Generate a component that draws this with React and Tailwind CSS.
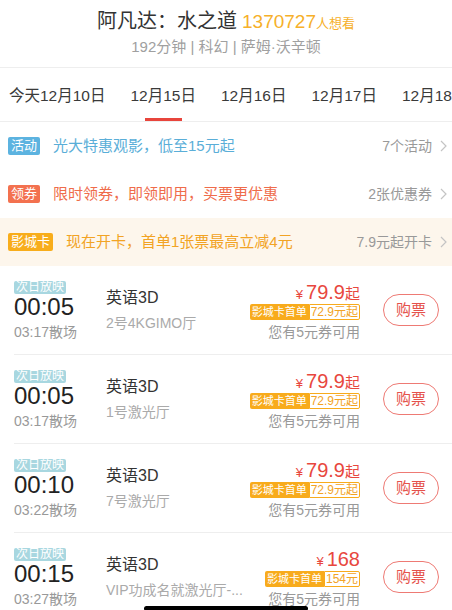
const dates = ["今天12月10日", "12月15日", "12月16日", "12月17日", "12月18日"];

const promos = [
  { tag: "活动", tagBg: "bg-[#5cb3e0]", text: "光大特惠观影，低至15元起", color: "text-[#5aaed8]", right: "7个活动", rowBg: "bg-white" },
  { tag: "领券", tagBg: "bg-[#f3714f]", text: "限时领券，即领即用，买票更优惠", color: "text-[#ef6c4b]", right: "2张优惠券", rowBg: "bg-white" },
  { tag: "影城卡", tagBg: "bg-[#f8ad1b]", text: "现在开卡，首单1张票最高立减4元", color: "text-[#f2a324]", right: "7.9元起开卡", rowBg: "bg-[#fdf6ec]" },
];

const shows = [
  { start: "00:05", end: "03:17散场", lang: "英语3D", hall: "2号4KGIMO厅", price: "79.9", from: true, card: "72.9元起" },
  { start: "00:05", end: "03:17散场", lang: "英语3D", hall: "1号激光厅", price: "79.9", from: true, card: "72.9元起" },
  { start: "00:10", end: "03:22散场", lang: "英语3D", hall: "7号激光厅", price: "79.9", from: true, card: "72.9元起" },
  { start: "00:15", end: "03:27散场", lang: "英语3D", hall: "VIP功成名就激光厅-...", price: "168", from: false, card: "154元" },
];

function Chevron() {
  return (
    <svg width="7" height="12" viewBox="0 0 7 12" className="ml-[8px] shrink-0">
      <polyline points="1,1 6,6 1,11" fill="none" stroke="#c4c4c4" strokeWidth="1.2" />
    </svg>
  );
}

function ShowRow({ show }) {
  return (
    <div className="ml-[14px] flex h-[89px] items-center border-b border-[#eeeeee] pr-[13px]">
      <div className="flex w-[92px] shrink-0 flex-col items-start pt-[2px]">
        <span className="h-[13px] rounded-[2px] bg-[#a8d7e0] px-[2px] text-[12px] leading-[13px] text-white">次日放映</span>
        <span className="text-[24px] leading-[26px] text-[#222]">{show.start}</span>
        <span className="mt-[3px] text-[14px] leading-[18px] text-[#999]">{show.end}</span>
      </div>
      <div className="flex min-w-0 flex-1 flex-col">
        <span className="text-[16px] leading-[20px] text-[#333]">{show.lang}</span>
        <span className="mt-[6px] whitespace-nowrap text-[14px] leading-[18px] text-[#aaa]">{show.hall}</span>
      </div>
      <div className="flex shrink-0 flex-col items-end">
        <div className="flex h-[24px] items-baseline text-[#e8473e]">
          <span className="mr-[3px] text-[13px]">¥</span>
          <span className="text-[20px] leading-[24px]">{show.price}</span>
          {show.from && <span className="text-[15px]">起</span>}
        </div>
        <div className="flex h-[16px] items-stretch rounded-[2px] text-[11px] leading-[16px]">
          <span className="rounded-l-[2px] bg-[#f8ab1c] px-[2px] text-white">影城卡首单</span>
          <span className="rounded-r-[2px] border border-[#f8ab1c] bg-white px-[1px] text-[12px] leading-[14px] text-[#f2a324]">{show.card}</span>
        </div>
        <span className="mt-[3px] text-[14px] leading-[18px] text-[#999]">您有5元券可用</span>
      </div>
      <button className="ml-[23px] flex h-[32px] w-[56px] shrink-0 items-center justify-center rounded-full border border-[#ee7a74] text-[15px] text-[#e5524c]">
        购票
      </button>
    </div>
  );
}

export default function App() {
  return (
    <div className="relative h-[610px] w-[452px] overflow-hidden bg-white font-['Liberation_Sans','Noto_Sans_CJK_SC',sans-serif]">
      <div className="flex h-[68px] flex-col items-center border-b border-[#eeeeee] pt-[8px]">
        <div className="flex h-[26px] items-baseline leading-[26px]">
          <span className="text-[20px] text-[#333]">阿凡达：水之道</span>
          <span className="ml-[5px] text-[19px] text-[#f6b02a]">1370727</span>
          <span className="text-[13px] text-[#f6b02a]">人想看</span>
        </div>
        <div className="mt-[3px] h-[20px] text-[15px] leading-[20px] text-[#a0a0a0]">192分钟 | 科幻 | 萨姆·沃辛顿</div>
      </div>

      <div className="flex h-[54px] gap-[25px] overflow-hidden border-b border-[#eeeeee] pl-[9px]">
        {dates.map((d, i) => (
          <div key={d} className="flex shrink-0 flex-col">
            <span className="pt-[17px] text-[15.5px] leading-[22px] text-[#3a3a3a] whitespace-nowrap">{d}</span>
            {i === 1 && <span className="mt-auto h-[3px] w-[37px] self-center bg-[#e8453c]" />}
          </div>
        ))}
      </div>

      {promos.map((p) => (
        <div key={p.tag} className={`flex h-[48px] items-center pl-[8px] pr-[5px] ${p.rowBg}`}>
          <span className={`h-[18px] rounded-[2px] px-[3px] text-[13px] leading-[18px] text-white ${p.tagBg}`}>{p.tag}</span>
          <span className={`ml-[13px] flex-1 text-[15px] ${p.color}`}>{p.text}</span>
          <span className="text-[14px] text-[#999]">{p.right}</span>
          <Chevron />
        </div>
      ))}

      {shows.map((s, i) => (
        <ShowRow key={i} show={s} />
      ))}

      <div className="absolute left-[144px] top-[606px] h-[5px] w-[164px] rounded-full bg-black" />
    </div>
  );
}
